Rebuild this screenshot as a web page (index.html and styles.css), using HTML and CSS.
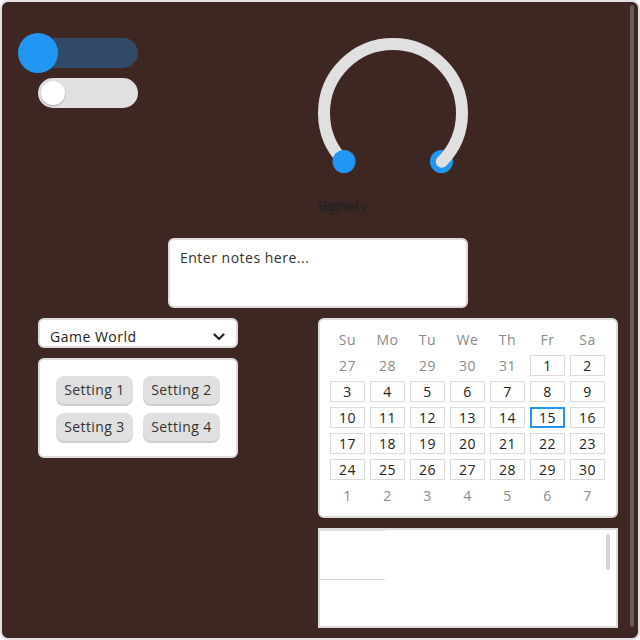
FILE: index.html
```html
<!DOCTYPE html>
<html>
<head>
<meta charset="utf-8">
<link rel="stylesheet" href="styles.css">
</head>
<body>
<div class="frame">
  <div class="layout">
    <div class="toggles">
      <div class="toggle toggle-on"><span class="thumb"></span></div>
      <div class="toggle toggle-off"><span class="thumb"></span></div>
    </div>
    <div class="knob">
      <svg class="knob-svg" width="150" height="150" viewBox="0 0 150 150">
        <circle cx="123.5" cy="123.5" r="11.5" fill="#2196f3"/>
        <path d="M 26.2 123.8 A 69 69 0 1 1 123.8 123.8" stroke="#e0e0e0" stroke-width="12" fill="none" stroke-linecap="round"/>
        <circle cx="26" cy="123.5" r="11.5" fill="#2196f3"/>
      </svg>
      <div class="knob-label"><span>Signal</span><span class="overlap">Battery</span></div>
    </div>
    <textarea class="notes" placeholder="Enter notes here..."></textarea>
    <div class="left-col">
      <div class="select">
        <span>Game World</span>
        <svg class="chev" width="12" height="8" viewBox="0 0 12 8"><path d="M1.5 1.5 L6 6 L10.5 1.5" stroke="#222" stroke-width="2.2" fill="none" stroke-linecap="round" stroke-linejoin="round"/></svg>
      </div>
      <div class="settings">
        <button class="btn">Setting 1</button>
        <button class="btn">Setting 2</button>
        <button class="btn">Setting 3</button>
        <button class="btn">Setting 4</button>
      </div>
    </div>
    <div class="right-col">
      <div class="calendar">
        <div class="dow">Su</div><div class="dow">Mo</div><div class="dow">Tu</div><div class="dow">We</div><div class="dow">Th</div><div class="dow">Fr</div><div class="dow">Sa</div>
        <div class="day other">27</div><div class="day other">28</div><div class="day other">29</div><div class="day other">30</div><div class="day other">31</div><div class="day">1</div><div class="day">2</div>
        <div class="day">3</div><div class="day">4</div><div class="day">5</div><div class="day">6</div><div class="day">7</div><div class="day">8</div><div class="day">9</div>
        <div class="day">10</div><div class="day">11</div><div class="day">12</div><div class="day">13</div><div class="day">14</div><div class="day selected">15</div><div class="day">16</div>
        <div class="day">17</div><div class="day">18</div><div class="day">19</div><div class="day">20</div><div class="day">21</div><div class="day">22</div><div class="day">23</div>
        <div class="day">24</div><div class="day">25</div><div class="day">26</div><div class="day">27</div><div class="day">28</div><div class="day">29</div><div class="day">30</div>
        <div class="day other">1</div><div class="day other">2</div><div class="day other">3</div><div class="day other">4</div><div class="day other">5</div><div class="day other">6</div><div class="day other">7</div>
      </div>
      <div class="listbox">
        <div class="list-item"></div>
        <div class="list-scroll"></div>
      </div>
    </div>
  </div>
  <div class="vscroll"></div>
</div>
</body>
</html>
```
FILE: styles.css
```css
* { box-sizing: border-box; }
html, body { margin: 0; padding: 0; background: #ffffff; }
body { font-family: "Open Sans", "Liberation Sans", sans-serif; color: #333; letter-spacing: 0.5px; }

.frame {
  position: relative;
  width: 640px;
  height: 640px;
  border: 2px solid #e0e0e0;
  border-radius: 8px;
  background: #3e2723;
  overflow: hidden;
}

.vscroll {
  position: absolute;
  right: 4px;
  top: 3px;
  bottom: 11px;
  width: 4px;
  border-radius: 2px;
  background: #6b5b58;
}

.layout {
  display: grid;
  grid-template-columns: 200px 300px;
  column-gap: 80px;
  padding: 36px 0 0 36px;
  align-items: start;
}

.toggles { display: flex; flex-direction: column; gap: 10px; }
.toggle {
  position: relative;
  width: 100px;
  height: 30px;
  border-radius: 15px;
}
.toggle-on { background: #304a68; }
.toggle-off { background: #e0e0e0; }
.toggle .thumb { position: absolute; border-radius: 50%; }
.toggle-on .thumb {
  width: 40px; height: 40px; left: -20px; top: -5px; background: #2196f3;
}
.toggle-off .thumb {
  width: 24px; height: 24px; left: 3px; top: 3px; background: #fff;
  box-shadow: 0 1px 2px rgba(0,0,0,0.25);
}

.knob { width: 150px; }
.knob-svg { display: block; }
.knob-label {
  position: relative;
  margin-top: 10px;
  height: 16px;
  font-size: 14px;
  line-height: 16px;
  color: #222;
  letter-spacing: 0.3px;
}
.knob-label .overlap { position: absolute; left: 0; top: 0; }

.notes {
  grid-column: 1 / -1;
  display: block;
  margin: 24px 0 0 130px;
  width: 300px;
  height: 70px;
  border: 2px solid #dcdcdc;
  border-radius: 6px;
  padding: 8px 10px 10px 10px;
  font-family: inherit;
  letter-spacing: 0.5px;
  font-size: 14px;
  line-height: 20px;
  resize: none;
  background: #fff;
  outline: none;
}
.notes::placeholder { color: #333; opacity: 1; }

.left-col, .right-col {
  margin-top: 10px;
  display: flex;
  flex-direction: column;
  gap: 10px;
}

.select {
  height: 30px;
  background: #fff;
  border: 2px solid #dcdcdc;
  border-radius: 6px;
  padding: 8px 10px 0 10px;
  font-size: 14px;
  line-height: 18px;
  color: #222;
  display: flex;
  justify-content: space-between;
  align-items: center;
}
.chev { margin-right: 1px; margin-top: 0; }

.settings {
  height: 100px;
  background: #fff;
  border: 2px solid #dcdcdc;
  border-radius: 6px;
  padding: 16px;
  display: grid;
  grid-template-columns: 77px 77px;
  grid-auto-rows: 28px;
  column-gap: 10px;
  row-gap: 9px;
}
.btn {
  border: none;
  border-radius: 8px;
  background: #e0e0e0;
  box-shadow: 0 2px 0 #cfcfcf;
  font-family: inherit;
  letter-spacing: 0.4px;
  font-size: 14px;
  color: #333;
  padding: 0 0 2px 0;
}

.calendar {
  height: 200px;
  background: #fff;
  border: 2px solid #dcdcdc;
  border-radius: 6px;
  padding: 10px;
  display: grid;
  grid-template-columns: repeat(7, 35px);
  grid-template-rows: 20px repeat(6, 21px);
  column-gap: 5px;
  row-gap: 5px;
  align-content: start;
}
.dow, .day {
  display: flex;
  align-items: center;
  justify-content: center;
  font-size: 14px;
  padding-bottom: 1px;
}
.dow { color: #8a8a8a; }
.day { border: 1px solid #dcdcdc; color: #222; }
.day.other { border-color: transparent; color: #8a8a8a; }
.day.selected { border: 2px solid #2196f3; }

.listbox {
  position: relative;
  height: 100px;
  background: #fff;
  border: 2px solid #dcdcdc;
}
.list-item {
  width: 65px;
  height: 50px;
  border-top: 1px solid #dcdcdc;
  border-bottom: 1px solid #dcdcdc;
}
.list-scroll {
  position: absolute;
  right: 6px;
  top: 4px;
  width: 4px;
  height: 36px;
  border-radius: 2px;
  background: #d4d4d4;
}
```
